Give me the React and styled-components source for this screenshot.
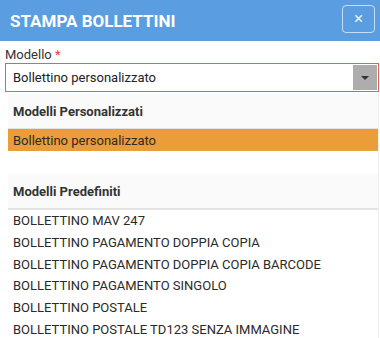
import React from "react";
import styled, { createGlobalStyle } from "styled-components";

const GlobalStyle = createGlobalStyle`
  body {
    margin: 0;
    background: #fff;
    font-family: Roboto, "Liberation Sans", Arial, sans-serif;
  }
`;

const predefiniti = [
  "BOLLETTINO MAV 247",
  "BOLLETTINO PAGAMENTO DOPPIA COPIA",
  "BOLLETTINO PAGAMENTO DOPPIA COPIA BARCODE",
  "BOLLETTINO PAGAMENTO SINGOLO",
  "BOLLETTINO POSTALE",
  "BOLLETTINO POSTALE TD123 SENZA IMMAGINE",
];

function App() {
  return (
    <Modal>
      <GlobalStyle />
      <Header>
        <Title>STAMPA BOLLETTINI</Title>
        <CloseButton>×</CloseButton>
      </Header>
      <Body>
        <Label>
          Modello <Required>*</Required>
        </Label>
        <Select>
          <SelectValue>Bollettino personalizzato</SelectValue>
          <Arrow>
            <Caret />
          </Arrow>
        </Select>
        <Dropdown>
          <GroupHeader>Modelli Personalizzati</GroupHeader>
          <Option selected>Bollettino personalizzato</Option>
          <Spacer />
          <GroupHeader thick>Modelli Predefiniti</GroupHeader>
          {predefiniti.map((m) => (
            <Option key={m}>{m}</Option>
          ))}
        </Dropdown>
      </Body>
    </Modal>
  );
}

export default App;

const Modal = styled.div`
  width: 380px;
  height: 338px;
  overflow: hidden;
  background: #fff;
`;

const Header = styled.div`
  height: 41px;
  background: #5b9de1;
  display: flex;
  align-items: center;
  justify-content: space-between;
  padding: 0 5px 0 10px;
  box-sizing: border-box;
`;

const Title = styled.h1`
  margin: 0;
  font-size: 17px;
  font-weight: 700;
  color: #fff;
`;

const CloseButton = styled.button`
  width: 33px;
  height: 28px;
  margin-top: -4px;
  border: 1px solid rgba(255, 255, 255, 0.65);
  border-radius: 4px;
  background: transparent;
  color: rgba(255, 255, 255, 0.85);
  font-size: 17px;
  font-family: Roboto, sans-serif;
  line-height: 1;
  padding: 0;
`;

const Body = styled.div`
  padding: 0 1px 0 5px;
`;

const Label = styled.div`
  margin-top: 6px;
  font-size: 13px;
  line-height: 15px;
  color: #333;
`;

const Required = styled.span`
  color: #d9443b;
`;

const Select = styled.div`
  margin-top: 1px;
  height: 29px;
  box-sizing: border-box;
  border: 1px solid #e0625c;
  display: flex;
  align-items: stretch;
`;

const SelectValue = styled.div`
  flex: 1;
  display: flex;
  align-items: center;
  padding-left: 7px;
  font-size: 13px;
  color: #222;
`;

const Arrow = styled.div`
  width: 24px;
  margin: 1px;
  background: #adadad;
  display: flex;
  align-items: center;
  justify-content: center;
`;

const Caret = styled.span`
  width: 0;
  height: 0;
  border-left: 4px solid transparent;
  border-right: 4px solid transparent;
  border-top: 4px solid #333;
`;

const Dropdown = styled.div`
  margin: 2px 1px 0 3px;
  background: #fff;
  box-shadow: 1px 0 1px rgba(0, 0, 0, 0.06);
`;

const GroupHeader = styled.div`
  height: 34px;
  display: flex;
  align-items: center;
  padding-left: 5px;
  background: #fafafa;
  border-bottom: ${(p) => (p.thick ? "2px" : "1px")} solid #e2e2e2;
  font-size: 13px;
  font-weight: 700;
  color: #333;
`;

const Option = styled.div`
  height: ${(p) => (p.selected ? "22px" : "21.7px")};
  display: flex;
  align-items: center;
  padding-left: 5px;
  font-size: 13px;
  color: #2a2a2a;
  background: ${(p) => (p.selected ? "#ea9d38" : "transparent")};
`;

const Spacer = styled.div`
  height: 23px;
`;
